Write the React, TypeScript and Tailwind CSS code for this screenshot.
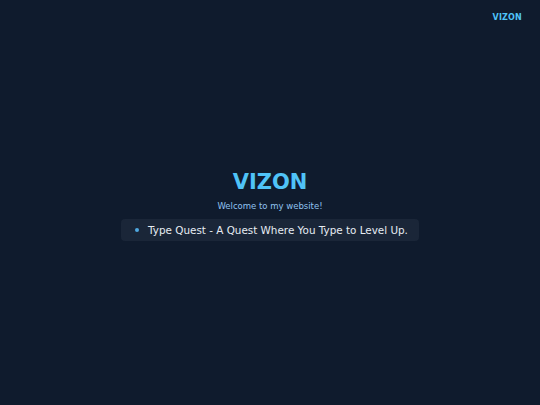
export default function App() {
  return (
    <div
      className="relative flex h-[405px] w-[540px] flex-col items-center justify-center bg-[#0f1b2d]"
      style={{ fontFamily: '"DejaVu Sans", Verdana, sans-serif' }}
    >
      <div className="absolute right-[18px] top-[12px] text-[8px] font-bold tracking-wide text-[#4fc3f7]">
        VIZON
      </div>
      <h1 className="mt-[8px] text-[21px] font-bold leading-none text-[#4fc3f7]">VIZON</h1>
      <p className="mt-[9px] text-[8.5px] leading-none text-[#90c2f0]">Welcome to my website!</p>
      <ul className="mt-[8px] rounded-[4px] bg-[#1a2638] py-[5px] pl-[14px] pr-[11px]">
        <li className="flex items-center text-[10.4px] leading-[12px] text-[#e6ecf3]">
          <span className="mr-[9px] h-[4px] w-[4px] rounded-full bg-[#4fa8e0]" />
          Type Quest - A Quest Where You Type to Level Up.
        </li>
      </ul>
    </div>
  );
}
